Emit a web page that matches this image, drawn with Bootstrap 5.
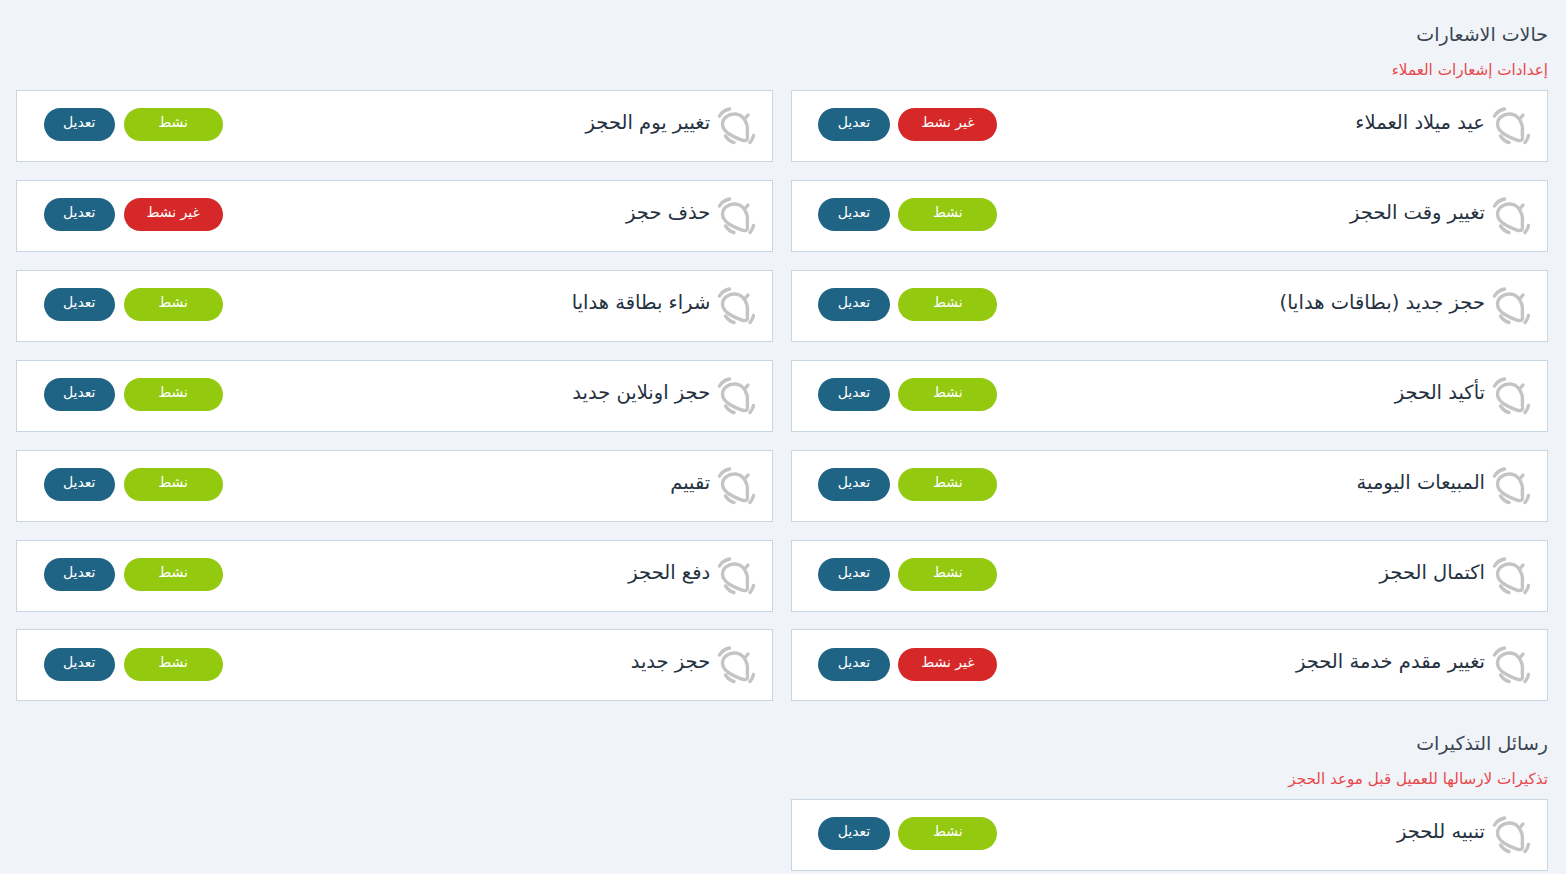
<!DOCTYPE html>
<html lang="ar" dir="rtl">
<head>
<meta charset="utf-8">
<title>حالات الاشعارات</title>
<link href="https://cdn.jsdelivr.net/npm/bootstrap@5.3.0/dist/css/bootstrap.min.css" rel="stylesheet">
<style>
html,body{height:874px;overflow:hidden}
body{background:#f0f4f8;font-family:"DejaVu Sans",sans-serif;color:#25313f}
.page-wrap{padding:16px 18px 0 16.45px}
.sec-title{font-size:19px;font-weight:400;color:#3a4552;line-height:36px;margin:0}
.sec-sub{font-size:15.2px;color:#e8474c;line-height:20px;margin:8px 0 10px}
.sec-next{margin-top:23.5px}
.cards-row{--bs-gutter-x:18px;--bs-gutter-y:17.91px}
.item-card{height:72px;background:#fff;border:1px solid #c9d5e1;padding:0 17px 0 26.2px}
.item-name{font-size:19.5px;line-height:30px;color:#25313f;padding-bottom:6px}
.bell{width:38px;height:38px;margin-left:7px;flex:none}
.pill{height:33px;border-radius:17px;border:0;color:#fff;font-size:14px;line-height:29px;padding:0 0 4px;text-align:center;margin-bottom:2.8px}
.pill-state{width:99px;margin-left:8.8px}
.pill-edit{width:71.2px;background:#1f6484}
.on{background:#93c90f}
.off{background:#d62828}
</style>
</head>
<body>
<svg width="0" height="0" class="position-absolute"><defs>
<symbol id="bell" viewBox="2.5 3 38 38"><g fill="none" stroke="#c4c4c4" stroke-width="3.4" stroke-linecap="round" stroke-linejoin="round"><path d="M8 20C8 14 14 9.500 21 10C27 10.500 31 15.500 32.500 21C33.500 25 32.500 29 33 32.500C33.500 35.500 32 37 29 36.500C25 35.500 22 34 18 32C14 30 8 26 8 20Z"/><path d="M11 32C13 35 16 37.500 19.500 38.500"/><path d="M31 14l2.500-3"/><path d="M5 12C7 8.500 10.500 6 15 5"/><path d="M35.500 38.500C37.500 36.500 38.500 34 39 31.500"/></g></symbol>
</defs></svg>
<div class="page-wrap">
<h5 class="sec-title">حالات الاشعارات</h5>
<p class="sec-sub">إعدادات إشعارات العملاء</p>
<div class="row cards-row">
<div class="col-6"><div class="item-card d-flex align-items-center"><svg class="bell"><use href="#bell"/></svg><span class="item-name flex-grow-1">عيد ميلاد العملاء</span><button class="pill pill-state off">غير نشط</button><button class="pill pill-edit">تعديل</button></div></div>
<div class="col-6"><div class="item-card d-flex align-items-center"><svg class="bell"><use href="#bell"/></svg><span class="item-name flex-grow-1">تغيير يوم الحجز</span><button class="pill pill-state on">نشط</button><button class="pill pill-edit">تعديل</button></div></div>
<div class="col-6"><div class="item-card d-flex align-items-center"><svg class="bell"><use href="#bell"/></svg><span class="item-name flex-grow-1">تغيير وقت الحجز</span><button class="pill pill-state on">نشط</button><button class="pill pill-edit">تعديل</button></div></div>
<div class="col-6"><div class="item-card d-flex align-items-center"><svg class="bell"><use href="#bell"/></svg><span class="item-name flex-grow-1">حذف حجز</span><button class="pill pill-state off">غير نشط</button><button class="pill pill-edit">تعديل</button></div></div>
<div class="col-6"><div class="item-card d-flex align-items-center"><svg class="bell"><use href="#bell"/></svg><span class="item-name flex-grow-1">حجز جديد (بطاقات هدايا)</span><button class="pill pill-state on">نشط</button><button class="pill pill-edit">تعديل</button></div></div>
<div class="col-6"><div class="item-card d-flex align-items-center"><svg class="bell"><use href="#bell"/></svg><span class="item-name flex-grow-1">شراء بطاقة هدايا</span><button class="pill pill-state on">نشط</button><button class="pill pill-edit">تعديل</button></div></div>
<div class="col-6"><div class="item-card d-flex align-items-center"><svg class="bell"><use href="#bell"/></svg><span class="item-name flex-grow-1">تأكيد الحجز</span><button class="pill pill-state on">نشط</button><button class="pill pill-edit">تعديل</button></div></div>
<div class="col-6"><div class="item-card d-flex align-items-center"><svg class="bell"><use href="#bell"/></svg><span class="item-name flex-grow-1">حجز اونلاين جديد</span><button class="pill pill-state on">نشط</button><button class="pill pill-edit">تعديل</button></div></div>
<div class="col-6"><div class="item-card d-flex align-items-center"><svg class="bell"><use href="#bell"/></svg><span class="item-name flex-grow-1">المبيعات اليومية</span><button class="pill pill-state on">نشط</button><button class="pill pill-edit">تعديل</button></div></div>
<div class="col-6"><div class="item-card d-flex align-items-center"><svg class="bell"><use href="#bell"/></svg><span class="item-name flex-grow-1">تقييم</span><button class="pill pill-state on">نشط</button><button class="pill pill-edit">تعديل</button></div></div>
<div class="col-6"><div class="item-card d-flex align-items-center"><svg class="bell"><use href="#bell"/></svg><span class="item-name flex-grow-1">اكتمال الحجز</span><button class="pill pill-state on">نشط</button><button class="pill pill-edit">تعديل</button></div></div>
<div class="col-6"><div class="item-card d-flex align-items-center"><svg class="bell"><use href="#bell"/></svg><span class="item-name flex-grow-1">دفع الحجز</span><button class="pill pill-state on">نشط</button><button class="pill pill-edit">تعديل</button></div></div>
<div class="col-6"><div class="item-card d-flex align-items-center"><svg class="bell"><use href="#bell"/></svg><span class="item-name flex-grow-1">تغيير مقدم خدمة الحجز</span><button class="pill pill-state off">غير نشط</button><button class="pill pill-edit">تعديل</button></div></div>
<div class="col-6"><div class="item-card d-flex align-items-center"><svg class="bell"><use href="#bell"/></svg><span class="item-name flex-grow-1">حجز جديد</span><button class="pill pill-state on">نشط</button><button class="pill pill-edit">تعديل</button></div></div>
</div>
<h5 class="sec-title sec-next">رسائل التذكيرات</h5>
<p class="sec-sub">تذكيرات لارسالها للعميل قبل موعد الحجز</p>
<div class="row cards-row">
<div class="col-6"><div class="item-card d-flex align-items-center"><svg class="bell"><use href="#bell"/></svg><span class="item-name flex-grow-1">تنبيه للحجز</span><button class="pill pill-state on">نشط</button><button class="pill pill-edit">تعديل</button></div></div>
</div>
</div>
</body>
</html>
